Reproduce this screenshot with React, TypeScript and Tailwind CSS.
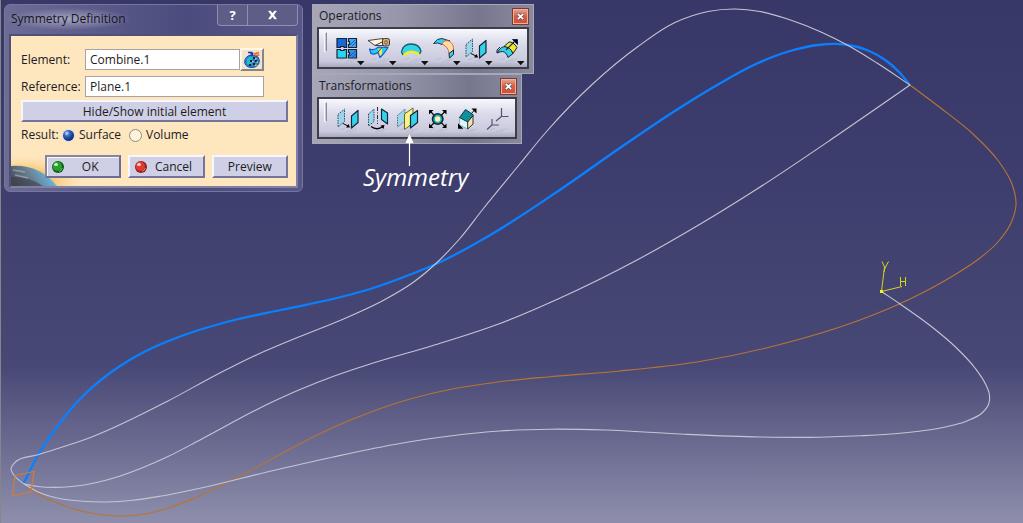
import type { ReactNode } from "react";

type Point = [number, number];

/* Tangent at a point, weighted by the lengths of its two neighbouring chords */
function tangent(prev: Point | undefined, at: Point, next: Point | undefined): Point {
  if (!prev || !next) {
    const a = prev ?? at;
    const b = next ?? at;
    const l = Math.hypot(b[0] - a[0], b[1] - a[1]) || 1;
    return [(b[0] - a[0]) / l, (b[1] - a[1]) / l];
  }
  const l0 = Math.hypot(at[0] - prev[0], at[1] - prev[1]);
  const l1 = Math.hypot(next[0] - at[0], next[1] - at[1]);
  const mix = (i: 0 | 1) =>
    (((at[i] - prev[i]) / l0) * l1 + ((next[i] - at[i]) / l1) * l0) / (l0 + l1);
  return [mix(0), mix(1)];
}

/* Smooth cubic path through a list of points */
function spline(points: Point[]): string {
  let d = `M${points[0][0]} ${points[0][1]}`;
  for (let i = 0; i < points.length - 1; i++) {
    const p = points[i];
    const q = points[i + 1];
    const s = tangent(points[i - 1], p, q);
    const t = tangent(p, q, points[i + 2]);
    const k = Math.hypot(q[0] - p[0], q[1] - p[1]) / 3;
    d += `C${p[0] + s[0] * k} ${p[1] + s[1] * k} ${q[0] - t[0] * k} ${q[1] - t[1] * k} ${q[0]} ${q[1]}`;
  }
  return d;
}

const combined: Point[] = [
  [24, 483], [38, 455], [54, 431], [80, 399], [110, 373], [147, 350.5], [180, 336.5], [223, 323],
  [283, 309.5], [333, 299], [370, 289], [413, 273.5], [437, 263.5], [487, 237], [559, 190.5],
  [622, 146.5], [678, 109], [718, 84.5], [757, 63.5], [790, 51], [818, 45], [845, 44.5], [868, 50.5],
  [886, 60.5], [899, 72], [910, 85],
];
const upper: Point[] = [
  [24, 484], [15, 476.5], [11, 469], [16, 461.5], [38, 454.7], [93, 436.5], [167, 401.5],
  [217, 374.5], [253, 356.5], [300, 336.500], [340, 320.5], [384, 300], [413, 282.5], [437, 262.500], [459, 239.5], [483, 209],
  [519, 165], [547, 131], [591, 85.500], [638, 46.5], [674, 23], [708, 11.500], [735, 9], [760, 11.500], [789, 19.5], [821, 32],
  [849, 46], [877, 63], [910, 85],
];
const middle: Point[] = [
  [24, 484], [38, 486.5], [62, 487.2], [92, 483.5], [117, 477], [143, 467.5], [167, 457], [200, 440], [267, 404.5],
  [300, 389.5], [333, 376.5], [367, 365], [433, 345.500], [500, 323.5],
  [558, 299], [638, 259.5], [702, 223], [757, 189], [837, 135.5], [910, 85],
];
const lower: Point[] = [
  [24, 484], [37, 491.5], [57, 498], [83, 501.300], [107, 502], [133, 500.3], [160, 496.3], [200, 488.3],
  [267, 472], [333, 457], [400, 443.5], [450, 436], [500, 431], [550, 429.2], [605, 430], [680, 434], [760, 437],
  [820, 437.200], [860, 435.8], [905, 432.8], [943, 427.5], [967, 421], [982, 413], [988.7, 404], [989.3, 394],
  [985.5, 384], [975, 368], [956, 347.5], [932, 327], [900, 304], [881.5, 291.5],
];
const mirrored: Point[] = [
  [24, 484], [35, 492], [57, 503], [83, 511.5], [112, 515.7], [140, 514.8], [167, 508.5], [200, 495.5],
  [232, 480], [267, 461.5], [300, 443.8], [333, 427.5], [367, 413.5], [405, 400.5], [450, 389.5], [500, 381.7],
  [550, 376.7], [620, 371], [700, 361.500], [780, 344.5], [860, 320], [910, 299], [956, 274], [978, 259.5], [997, 243],
  [1010.500, 224], [1016, 205], [1012, 184], [998, 160.5], [973, 134], [940, 107.5], [910, 85],
];

function Viewport() {
  return (
    <svg
      className="absolute inset-y-0 -left-px h-full w-screen"
      viewBox="0 0 1023 523"
      preserveAspectRatio="xMinYMin meet"
      fill="none"
      aria-hidden="true"
    >
      <path d={spline(mirrored)} stroke="#b87436" strokeWidth="1.1" />
      <path d={spline(combined)} stroke="#0a80ff" strokeWidth="2.3" />
      <g stroke="#c4c4d6" strokeWidth="1.1">
        <path d={spline(upper)} />
        <path d={spline(middle)} />
        <path d={spline(lower)} />
      </g>
      <path d="M15 475.5L34 471.5L31 492L12.500 496Z" stroke="#cf7d3c" strokeWidth="1.2" />
      <g stroke="#d4d41c" strokeWidth="1">
        <path d="M881.500 291.500L884.500 267M881.500 291.500L902 286.500" />
        <path d="M882 261.500L885 268L888.500 261.500M885 268L884 272" />
        <path d="M900.500 277V286M905.500 277V286M900.500 281.500H905.500" />
      </g>
      <rect x="880" y="290" width="3" height="3" fill="#f2f21a" />
    </svg>
  );
}

const bevel =
  "border-2 border-t-[#f6f6fc] border-l-[#f6f6fc] border-r-[#74749a] border-b-[#74749a] bg-[#cfcfe6]";

function DialogButton({ children, focused = false }: { children: ReactNode; focused?: boolean }) {
  return (
    <button
      type="button"
      className={
        focused
          ? "flex h-[23px] flex-1 items-center border-2 border-[#6d6d90] border-t-[#85859f] border-l-[#85859f] bg-[#cfcfe6] px-1 shadow-[inset_1px_1px_0_#f6f6fc]"
          : `flex h-[23px] flex-1 items-center px-1 ${bevel}`
      }
    >
      {children}
    </button>
  );
}

function Ball({ color, dark }: { color: string; dark: string }) {
  return (
    <svg width="14" height="14" viewBox="0 0 14 14" aria-hidden="true">
      <circle cx="7" cy="7" r="6" fill={dark} />
      <circle cx="6.300" cy="6.300" r="4.700" fill={color} />
      <ellipse cx="5" cy="4.600" rx="2" ry="1.500" fill="#ffffff" opacity="0.8" />
      <path d="M8 11.500Q10.800 10.500 11.300 8" stroke="#ffffff" strokeWidth="0.800" opacity="0.6" fill="none" />
    </svg>
  );
}

function BagIcon() {
  return (
    <svg width="18" height="18" viewBox="0 0 18 18" aria-hidden="true">
      <path d="M6 4.500Q12 3.500 15 6Q17 9 16 12Q14 16.500 9 16.500Q3 16.500 1.800 12Q1 7 6 4.500Z" fill="#1c86d2" stroke="#1d4cae" />
      <path d="M4 8Q6 5 10 6Q8 9 9 12Q7 15.500 4 13Z" fill="#27b9c4" />
      <path d="M5 1.500H8.500L8 4M10 1.500L9 4.500" stroke="#2233b8" strokeWidth="1.500" fill="none" />
      <path d="M11 3L16 1.500M12 4.500L16.500 4" stroke="#e8641c" strokeWidth="1.500" />
      <path d="M10 6h2v2h-2zM7 9h2v2H7zM12 9h2v2h-2zM10 12h2v2h-2zM6 13h2v2H6z" fill="#102030" />
      <path d="M12 7h1.500v1.500H12zM9 10h1.500v1.500H9zM13.500 10.500h1.500V12h-1.500zM12 13.500h1.500V15H12z" fill="#f0c070" />
    </svg>
  );
}

function PlanetCorner() {
  return (
    <svg className="absolute bottom-0 left-0" width="80" height="36" viewBox="0 0 80 36" aria-hidden="true">
      <defs>
        <radialGradient id="halo" cx="0.15" cy="0.9" r="0.8">
          <stop offset="0.3" stopColor="#f5b450" />
          <stop offset="0.65" stopColor="#fbd492" stopOpacity="0.75" />
          <stop offset="1" stopColor="#ffe6bd" stopOpacity="0" />
        </radialGradient>
        <linearGradient id="planet" x1="0" y1="0.6" x2="1" y2="0.3">
          <stop offset="0" stopColor="#4a505e" />
          <stop offset="0.45" stopColor="#6c8496" />
          <stop offset="0.75" stopColor="#66afd6" />
          <stop offset="1" stopColor="#b9e2f2" />
        </linearGradient>
      </defs>
      <rect width="80" height="36" fill="url(#halo)" />
      <path d="M0 16Q28 14 46 36H0Z" fill="url(#planet)" />
      <path d="M0 27Q18 26 32 36H0Z" fill="#3c3e4a" opacity="0.6" />
      <path d="M2 20L14 22M4 25L17 28" stroke="#b4b8be" strokeWidth="1.500" opacity="0.6" />
    </svg>
  );
}

function SymmetryDialog() {
  const radio =
    "h-[13px] w-[13px] appearance-none rounded-full border border-[#8c8c88] bg-[#fff3da] checked:border-[#cfe0f4] checked:bg-[radial-gradient(circle_at_35%_30%,#dcecff_0%,#3e6cc0_25%,#123a86_60%,#0b2c6c_100%)]";
  const field = "h-[21px] min-w-0 flex-1 border border-[#a3a3a8] bg-white px-1 outline-none";
  return (
    <section
      aria-label="Symmetry Definition"
      className="w-[299px] shrink-0 rounded-md border border-[#77779e] bg-[linear-gradient(90deg,#6c6c97,#4b4b7d_60%,#57578a)] px-1 pb-[3px]"
    >
      <header className="flex h-[29px] items-start justify-between">
        <h1 className="mt-[3px] -ml-1 rounded-full bg-[radial-gradient(closest-side,#b4b4cbcc,#8c8cb000)] px-1.5 text-[12px] leading-[22px] text-[#15151f]">
          Symmetry Definition
        </h1>
        <div className="flex h-[21px] overflow-hidden rounded-b border border-t-0 border-[#8f8fb0] bg-[#5d5d88] text-[13px] leading-[18px] font-bold text-white">
          <button type="button" aria-label="Help" className="w-[30px] border-r border-[#8f8fb0]">
            ?
          </button>
          <button type="button" aria-label="Close" className="flex w-[49px] items-center justify-center">
            <svg width="11" height="10" viewBox="0 0 11 10" aria-hidden="true">
              <path d="M0.500 0.500H3.800L5.500 2.800L7.200 0.500H10.500L7.300 5L10.500 9.500H7.200L5.500 7.200L3.800 9.500H0.500L3.700 5Z" fill="#fff" stroke="#44446a" strokeWidth="0.500" />
            </svg>
          </button>
        </div>
      </header>
      <form className="relative border-2 border-[#8080a4] border-t-[#505074] border-l-[#505074] bg-[#fee6bf] pt-3 pr-2 pb-2 pl-[10px]">
        <PlanetCorner />
        <div className="relative flex flex-col">
          <div className="flex items-center pr-6">
            <label htmlFor="element" className="w-[64px]">Element:</label>
            <input id="element" defaultValue="Combine.1" className={field} />
            <button type="button" aria-label="Select element" className="flex h-[23px] w-6 items-center justify-center border-2 border-[#fff8e8] border-r-[#85858c] border-b-[#85858c] bg-[#f2e4cc]">
              <BagIcon />
            </button>
          </div>
          <div className="mt-[5px] flex items-center pr-6">
            <label htmlFor="reference" className="w-[64px]">Reference:</label>
            <input id="reference" defaultValue="Plane.1" className={field} />
          </div>
          <button type="button" className={`mt-[3px] h-[22px] leading-[17px] ${bevel}`}>
            Hide/Show initial element
          </button>
          <div role="radiogroup" aria-labelledby="result-label" className="mt-1 flex h-[18px] items-center">
            <span id="result-label" className="w-[41px]">Result:</span>
            <label className="flex w-[67px] items-center gap-1">
              <input type="radio" name="result" defaultChecked className={radio} />
              Surface
            </label>
            <label className="flex items-center gap-1">
              <input type="radio" name="result" className={radio} />
              Volume
            </label>
          </div>
          <div className="mt-[11px] ml-6 flex gap-[7px]">
            <DialogButton focused>
              <Ball color="#27a32b" dark="#0c5f14" />
              <span className="flex-1 text-center">OK</span>
            </DialogButton>
            <DialogButton>
              <Ball color="#e23a2c" dark="#8e1f1c" />
              <span className="flex-1 text-center">Cancel</span>
            </DialogButton>
            <DialogButton>
              <span className="flex-1 text-center">Preview</span>
            </DialogButton>
          </div>
        </div>
      </form>
    </section>
  );
}

/* ---- Toolbar drawings, 38 units tall ---- */

const ink = "#14243c";
const cyan = "#35d3ea";
const pale = "#9bd5ea";

const icons: Record<string, ReactNode> = {
  Join: (
    <g stroke={ink} strokeWidth="1.200">
      <path d="M4 9.500H13.500V18.500H11V17.500H7.500V18.500H4Z" fill="#1769d8" />
      <path d="M15.500 9.500H23.500V18.500H15.500V15.500H16.500V12.500H15.500Z" fill="#45a5ee" />
      <path d="M4 20.500H7.500V21.500H11V20.500H13.500V29H4Z" fill="#28d6f2" />
      <path d="M15.500 20.500H23.500V29H15.500V26H16.500V23.500H15.500Z" fill="#378fe4" />
      <path d="M17 16L22 11M18.500 17.500L23 13M17 27L22.500 22M19 28.500L23 25" stroke="#1450a8" strokeWidth="0.900" />
    </g>
  ),
  Split: (
    <g strokeLinejoin="round">
      <path d="M4.500 20Q10 22 13 18L23 18.500Q19 25 15 28.500L13 23.500Q9 26 6 24.500Z" fill="#25cdf0" stroke="#1658d0" strokeWidth="1.200" />
      <path d="M13 20L17 19L17 25L15 27Z" fill="#f7ec2e" />
      <path d="M13 23L17 18.500" stroke="#143ca0" />
      <path d="M3 11.500L18 9.500V16.500H10Z" fill="#fff6e4" stroke="#343434" strokeWidth="0.900" />
      <path d="M10 16.500L18 12.500" stroke="#343434" />
      <rect x="17.500" y="9.500" width="7" height="7.500" rx="2" fill="#d2b07a" stroke="#4a371f" />
      <path d="M20 12H22V15H20Z" fill="#fff" stroke="#4a371f" strokeWidth="0.800" />
    </g>
  ),
  Boundary: (
    <g>
      <path d="M4.500 24Q5 15.500 14 15Q23 15.500 24 23L22.500 25Q14 19 7 26Z" fill={cyan} />
      <path d="M6.500 26.500Q14 19.500 22.500 25.500" stroke="#f5ed1d" strokeWidth="2.600" fill="none" />
      <path d="M6 26L4.500 23Q6 15 14 15Q22.500 15 24 22.500L22.500 25" stroke="#155c68" strokeWidth="1.300" fill="none" />
    </g>
  ),
  Fillet: (
    <g strokeLinejoin="round" stroke={ink}>
      <path d="M4.500 14.500Q8 9 13 9.500L21 12Q16 11 13 15.500Q9 13 4.500 14.500Z" fill={cyan} strokeWidth="0.900" />
      <path d="M13 15Q15 10.500 20 12Q25 15 24.500 21L20 25Q20 18 13 15Z" fill="#ffe0a2" stroke="#dc5636" strokeWidth="0.900" />
      <path d="M20 24.500L24.500 21V25.500L20.500 29Z" fill={cyan} />
    </g>
  ),
  Translate: (
    <g strokeLinejoin="round">
      <path d="M5 15.500L11.500 10V22.500L5 28Z" fill={pale} stroke="#30495b" strokeDasharray="1.500 1" />
      <path d="M18.500 17L25 11.500V23.500L18.500 29Z" fill={cyan} stroke={ink} strokeWidth="1.200" />
      <path d="M10 24.500L16 27.500" stroke="#000" />
      <path d="M13 28.500L17 28.500L15.500 25Z" fill="#000" />
    </g>
  ),
  Extrapolate: (
    <g strokeLinejoin="round" stroke={ink}>
      <path d="M4 24Q8 17 13 17.500Q18 18.500 20 24.500L15 28.500Q13.500 23 9.500 22.500Q7 22.500 4 24Z" fill={cyan} />
      <path d="M11 17.500L16 13Q20 12.500 24 18.500L20 24.500Q17.500 18 11 17.500Z" fill="#f5e626" />
      <path d="M13 21L23 11" strokeWidth="1.200" />
      <path d="M19.500 10.500H24.500V15.500Z" fill="#000" />
      <path d="M4 24V21L7 18" fill="none" />
    </g>
  ),
  Rotate: (
    <g strokeLinejoin="round">
      <path d="M5.500 15L11 10V22.500L5.500 27Z" fill={pale} stroke="#30495b" strokeDasharray="1.500 1" />
      <path d="M14.500 8V25" stroke="#26263a" strokeDasharray="4 1.500 1 1.500" />
      <path d="M18.500 10L24.500 14V25L18.500 20.500Z" fill={cyan} stroke={ink} strokeWidth="1.200" />
      <path d="M8 27.500Q14 32 20 27.500" stroke="#000" strokeWidth="1.400" fill="none" />
      <path d="M17.500 26.500L21.500 26L20.500 30Z" fill="#000" />
    </g>
  ),
  Symmetry: (
    <g strokeLinejoin="round">
      <path d="M4.500 16.500L12 10V22L4.500 28Z" fill={pale} stroke="#4b6e80" strokeDasharray="1.500 1" />
      <path d="M11.500 15L20 9V24L11.500 30.500Z" fill="#faf28a" stroke="#6c651e" />
      <path d="M17.500 16.500L24.500 11.500V23.500L17.500 29Z" fill={cyan} stroke={ink} strokeWidth="1.200" />
    </g>
  ),
  Scaling: (
    <g>
      <path d="M7 12L22.500 28M22.500 12L7 28" stroke="#111" strokeWidth="1.200" />
      <path d="M6 11H10.500L6 15.500ZM23.500 11H19L23.500 15.500ZM6 29H10.500L6 24.500ZM23.500 29H19L23.500 24.500Z" fill="#000" />
      <circle cx="14.700" cy="20" r="5.200" fill="#1fb3b6" stroke={ink} strokeWidth="1.600" />
      <circle cx="14.700" cy="20" r="2.700" fill="#faf7a8" />
    </g>
  ),
  Affinity: (
    <g strokeLinejoin="round">
      <path d="M6.500 28L22 10.500" stroke="#111" />
      <path d="M18.500 9.500H23.500V14.500ZM5 24.500V29.500H10Z" fill="#000" />
      <path d="M6.500 18.500L14.700 22V30L6.500 26Z" fill="#d8f6fc" stroke="#6aa9b8" strokeWidth="0.800" />
      <path d="M14.700 22L20 17V25L14.700 30Z" fill="#ffe0a2" stroke={ink} strokeWidth="0.900" />
      <path d="M5 24.500V29.500H10Z" fill="#000" />
      <path d="M6.500 18.500L12.500 10.500L20.500 16L14.700 23Z" fill="#0d9098" stroke={ink} strokeWidth="0.900" />
    </g>
  ),
  "Axis To Axis": (
    <g stroke="#54546e" strokeWidth="1.200" fill="none">
      <path d="M18.500 9V17.500H25.500M18.500 17.500L13 22" />
      <path d="M9 20V26H16M9 26L4 30.500" />
    </g>
  ),
};

function Tool({ name, width, menu = false }: { name: string; width: number; menu?: boolean }) {
  return (
    <button type="button" aria-label={name} className="block">
      <svg width={width} height="38" viewBox={`0 0 ${width} 38`} fill="none" aria-hidden="true">
        <path d="M7 31L12 29M13 33L20 30M17 33.500L24 29.500" stroke="#b9b9cb" strokeWidth="0.900" />
        {icons[name]}
        {menu && <path d="M24 32H31.500L27.700 36.200Z" fill="#111" />}
      </svg>
    </button>
  );
}

function Toolbar({ title, tools, menu = false }: { title: string; tools: string[]; menu?: boolean }) {
  return (
    <section
      aria-label={title}
      className="border border-[#a7a7b8] bg-[linear-gradient(90deg,#a6a6b8,#9696aa_40%,#76768e_75%,#8a8a9e)] px-1 pb-1"
    >
      <header className="flex h-[22px] items-center justify-between pl-0.5">
        <h2 className="text-[12px] leading-[18px] text-[#1b1b26]">{title}</h2>
        <button
          type="button"
          aria-label={`Close ${title}`}
          className="flex h-[17px] w-[17px] items-center justify-center border border-[#7a3c38] bg-[linear-gradient(#eba690,#d95a3c_50%,#cf5434)] shadow-[inset_0_0_0_1px_#eeb09c]"
        >
          <svg width="7" height="7" viewBox="0 0 7 7" aria-hidden="true">
            <path d="M0.500 0.500L6.500 6.500M6.500 0.500L0.500 6.500" stroke="#505060" strokeWidth="3" />
            <path d="M0.800 0.800L6.200 6.200M6.200 0.800L0.800 6.200" stroke="#fff" strokeWidth="1.700" />
          </svg>
        </button>
      </header>
      <div className="flex h-[42px] items-start border-2 border-[#3d3d4a] bg-[linear-gradient(#f7f7fc,#dadaea_40%,#cacade_85%,#a9a9bc)] pr-0.5">
        <span className="mr-[6px] ml-[5px] mt-[3px] h-5 w-[3px] border border-[#f8f8fc] border-r-[#8b8b9e] bg-[#c5c5d5]" />
        {tools.map((name) => (
          <Tool key={name} name={name} width={menu ? 32 : 30} menu={menu} />
        ))}
      </div>
    </section>
  );
}

export default function App() {
  return (
    <main className="relative min-h-screen overflow-hidden border-l border-[#85858c] bg-[linear-gradient(#383868_0%,#3e3e6e_35%,#444472_55%,#484876_70%,#62628a_81%,#8e8eac_100%)] font-['Open_Sans','Noto_Sans',sans-serif] text-[12px] leading-[18px] text-[#1c1c24]">
      <Viewport />
      <div className="relative flex items-start gap-[9px] pt-1 pl-[3px]">
        <SymmetryDialog />
        <div className="flex flex-col items-start">
          <Toolbar title="Operations" menu tools={["Join", "Split", "Boundary", "Fillet", "Translate", "Extrapolate"]} />
          <Toolbar
            title="Transformations"
            tools={["Translate", "Rotate", "Symmetry", "Scaling", "Affinity", "Axis To Axis"]}
          />
          <figure className="relative -mt-[10px] ml-[51px] flex flex-col items-center text-white">
            <svg width="11" height="32" viewBox="0 0 11 32" className="-ml-3" aria-hidden="true">
              <path d="M5.500 0L9.500 9H1.500Z" fill="#fff" />
              <path d="M5.500 8V32" stroke="#fff" strokeWidth="1.200" />
            </svg>
            <figcaption className="text-[24px] leading-[22px] italic">Symmetry</figcaption>
          </figure>
        </div>
      </div>
    </main>
  );
}
